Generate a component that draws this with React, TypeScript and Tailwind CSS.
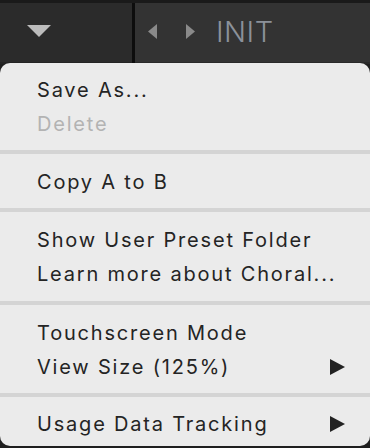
const font = { fontFamily: "Inter, 'Noto Sans', sans-serif" };

function Item({ label, disabled, sub }: { label: string; disabled?: boolean; sub?: boolean }) {
  return (
    <div
      className={`flex h-[34px] items-center justify-between pl-[37px] pr-[25px] text-[20px] leading-[34px] tracking-[1.8px] ${
        disabled ? "text-[#b3b3b3]" : "text-[#242424]"
      }`}
    >
      <span>{label}</span>
      {sub && (
        <svg width="15" height="16" viewBox="0 0 15 16" aria-hidden="true">
          <path d="M0 0 L15 8 L0 16 Z" fill="#222" />
        </svg>
      )}
    </div>
  );
}

function Sep() {
  return <div className="h-[4px] bg-[#d4d4d4]" />;
}

export default function App() {
  return (
    <div className="flex h-[448px] w-[370px] flex-col overflow-hidden bg-[#1f1f1f]" style={font}>
      {/* header strip */}
      <div className="flex h-[64px] shrink-0 border-t-[3px] border-[#1a1a1a]">
        <div className="flex w-[132px] items-center border-b-2 border-[#242424] bg-[#2b2b2b] pb-[3px] pl-[27px]">
          <svg width="24" height="12" viewBox="0 0 24 12" aria-hidden="true">
            <path d="M0 0 L24 0 L12 12 Z" fill="#bcbcbc" />
          </svg>
        </div>
        <div className="w-[3px] bg-[#0d0d0d]" />
        <div className="flex flex-1 items-center border-b-2 border-[#2a2a2a] bg-[#333333] pb-[3px] pl-[13px]">
          <svg width="10" height="15" viewBox="0 0 10 15" aria-hidden="true">
            <path d="M9 0 L0 7.5 L9 15 Z" fill="#8a8a8a" />
          </svg>
          <svg className="ml-[27px]" width="10" height="15" viewBox="0 0 10 15" aria-hidden="true">
            <path d="M1 0 L10 7.5 L1 15 Z" fill="#8a8a8a" />
          </svg>
          <span className="ml-[21px] text-[29px] font-light leading-none tracking-[0.5px] text-[#8b919a]">INIT</span>
        </div>
      </div>

      {/* menu */}
      <div className="-mt-px mb-[2px] flex-1 rounded-[10px] bg-[#ebebeb]">
        <div className="pb-[9px] pt-[10px]">
          <Item label="Save As..." />
          <Item label="Delete" disabled />
        </div>
        <Sep />
        <div className="pb-[9px] pt-[11px]">
          <Item label="Copy A to B" />
        </div>
        <Sep />
        <div className="pb-[10px] pt-[11px]">
          <Item label="Show User Preset Folder" />
          <Item label="Learn more about Choral..." />
        </div>
        <Sep />
        <div className="pb-[9px] pt-[11px]">
          <Item label="Touchscreen Mode" />
          <Item label="View Size (125%)" sub />
        </div>
        <Sep />
        <div className="pt-[10px]">
          <Item label="Usage Data Tracking" sub />
        </div>
      </div>
    </div>
  );
}
